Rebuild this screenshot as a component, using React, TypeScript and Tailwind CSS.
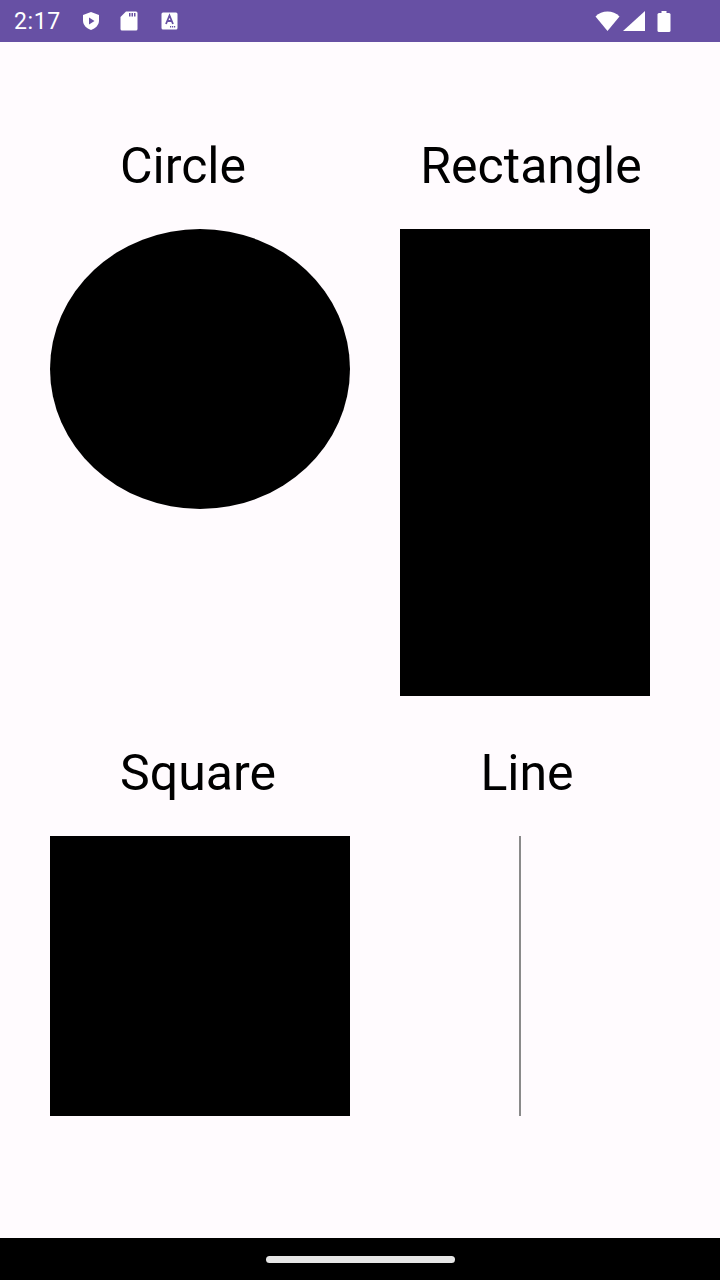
import React from "react";

const font = { fontFamily: "Roboto, 'Noto Sans', sans-serif" };

function StatusBar() {
  return (
    <div className="h-[42px] bg-[#6750a4] flex items-center text-white" style={font}>
      <span className="ml-[14px] w-[48px] text-[23px] leading-none tracking-[0.6px]">2:17</span>
      {/* shield play */}
      <svg className="ml-[19px]" width="20" height="20" viewBox="0 0 20 20">
        <path d="M10 1 L18 4 V9.5 C18 14 14.5 17.5 10 19 C5.5 17.5 2 14 2 9.5 V4 Z" fill="white" />
        <path d="M8 6.5 L13.5 10 L8 13.5 Z" fill="#6750a4" />
      </svg>
      {/* sd card */}
      <svg className="ml-[19px]" width="18" height="20" viewBox="0 0 18 20">
        <path d="M6 0.5 H16 A1.5 1.5 0 0 1 17.5 2 V18 A1.5 1.5 0 0 1 16 19.5 H2 A1.5 1.5 0 0 1 0.5 18 V6 Z" fill="white" />
        <rect x="9" y="2" width="1.5" height="3.5" fill="#6750a4" />
        <rect x="11.5" y="2" width="1.5" height="3.5" fill="#6750a4" />
        <rect x="14" y="2" width="1.5" height="3.5" fill="#6750a4" />
      </svg>
      {/* A icon */}
      <svg className="ml-[23px]" width="17" height="18" viewBox="0 0 17 18">
        <rect x="0.5" y="0.5" width="16" height="17" rx="1.5" fill="white" />
        <path d="M5 12 L8.5 3.5 L12 12 M6.2 9 H10.8" stroke="#6750a4" strokeWidth="1.8" fill="none" />
        <rect x="9" y="14" width="1.2" height="1.5" fill="#6750a4" />
        <rect x="11" y="14" width="1.2" height="1.5" fill="#6750a4" />
        <rect x="13" y="14" width="1.2" height="1.5" fill="#6750a4" />
      </svg>
      <div className="ml-auto flex items-center mr-[49px]">
        <svg width="25" height="20" viewBox="0 0 25 20">
          <path d="M0.5 5.5 A17 17 0 0 1 24.5 5.5 L12.5 20 Z" fill="white" />
        </svg>
        <svg className="ml-[3px]" width="22" height="20" viewBox="0 0 22 20">
          <path d="M22 0 V20 H0 Z" fill="white" />
        </svg>
        <svg className="ml-[12px]" width="14" height="21" viewBox="0 0 14 21">
          <rect x="4.5" y="0" width="5" height="2" fill="white" />
          <rect x="0.5" y="2" width="13" height="19" rx="1.5" fill="white" />
        </svg>
      </div>
    </div>
  );
}

function Label({ children, shift }: { children: React.ReactNode; shift: string }) {
  return (
    <div className={`text-[50px] leading-[50px] text-black text-center whitespace-nowrap ${shift}`} style={font}>
      {children}
    </div>
  );
}

export default function App() {
  return (
    <div className="w-[720px] h-[1280px] bg-[#fffbfe] flex flex-col overflow-hidden">
      <StatusBar />
      <div className="flex-1 flex flex-col">
        {/* Row 1 */}
        <div className="flex pt-[99px] pl-[50px] gap-[50px]">
          <div className="w-[300px] flex flex-col">
            <Label shift="mr-[34px]">Circle</Label>
            <div className="mt-[38px] w-[300px] h-[280px] rounded-[50%] bg-black" />
          </div>
          <div className="w-[250px] flex flex-col">
            <div className="-mr-[12px]">
              <Label shift="">Rectangle</Label>
            </div>
            <div className="mt-[38px] w-[250px] h-[467px] bg-black" />
          </div>
        </div>
        {/* Row 2 */}
        <div className="flex pt-[52px] pl-[50px] gap-[50px]">
          <div className="w-[300px] flex flex-col">
            <Label shift="mr-[4px]">Square</Label>
            <div className="mt-[38px] w-[300px] h-[280px] bg-black" />
          </div>
          <div className="w-[250px] flex flex-col">
            <Label shift="ml-[4px]">Line</Label>
            <div className="mt-[38px] h-[280px] flex">
              <div className="ml-[119px] w-[2px] h-[280px] bg-[#8a8a8a]" />
            </div>
          </div>
        </div>
      </div>
      <div className="h-[42px] bg-black flex items-center justify-center">
        <div className="w-[189px] h-[7px] rounded-full bg-[#e6e6e6]" />
      </div>
    </div>
  );
}
